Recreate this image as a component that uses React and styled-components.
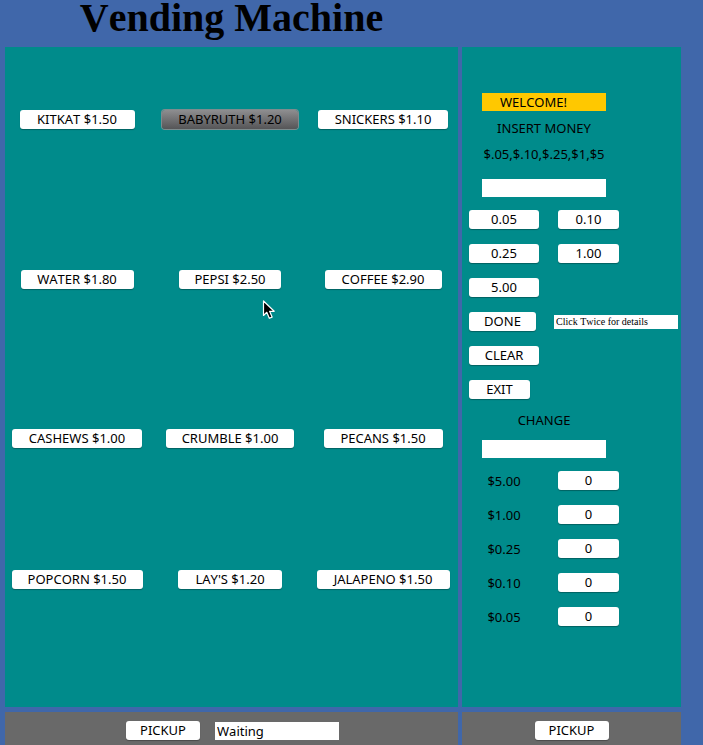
import React, { useState } from "react";
import styled, { createGlobalStyle, css } from "styled-components";

const GlobalStyle = createGlobalStyle`
  *, *::before, *::after { box-sizing: border-box; }
  body {
    margin: 0;
    background: #4067aa;
    color: #000;
    font: 13px/18px "Noto Sans", "Open Sans", sans-serif;
    font-kerning: none;
  }
  button, input { font-kerning: none; }
`;

const Page = styled.div`
  position: relative;
  min-height: 100vh;
  display: grid;
  grid-template-columns: minmax(0, 453fr) minmax(0, 219fr);
  grid-template-rows: auto 1fr auto;
  column-gap: 4px;
  padding: 0 22px 0 5px;
`;

const Title = styled.h1`
  grid-column: 1;
  margin: 0;
  padding-bottom: 11px;
  font: bold 40px/36px "Liberation Serif", serif;
  font-kerning: none;
  text-align: center;
  white-space: nowrap;
`;

const Products = styled.section`
  grid-column: 1;
  display: grid;
  grid-template-columns: repeat(3, minmax(0, 1fr));
  grid-template-rows: 160px 159px 141px auto;
  column-gap: 19px;
  align-items: start;
  justify-items: center;
  padding: 63px 8px 48px 5px;
  background: #008b8b;
`;

const Button = styled.button`
  width: ${(p) => (p.$width ? `${p.$width}px` : "auto")};
  height: 19px;
  padding: 0;
  border: 0;
  border-radius: 3px;
  background: #fff;
  box-shadow: 0 1px 1px rgba(0, 0, 0, 0.3);
  color: #000;
  font: inherit;
  font-kerning: none;
  line-height: 19px;
  text-align: center;
  white-space: nowrap;
  ${(p) =>
    p.$pressed &&
    css`
      background: linear-gradient(#8e8e90, #555557);
      box-shadow: 0 0 0 1px #7d8c8e;
    `}
`;

const Controls = styled.section`
  grid-column: 2;
  display: flex;
  flex-direction: column;
  align-items: flex-start;
  padding: 46px 3px 24px 7px;
  background: #008b8b;
`;

const Display = styled.div`
  width: 150px;
  display: flex;
  flex-direction: column;
  align-items: center;
  gap: 8px;
`;

const Caption = styled.label`
  white-space: nowrap;
`;

const Field = styled.input`
  width: 124px;
  height: 18px;
  padding: 0 2px;
  border: 0;
  border-radius: 0;
  background: #fff;
  color: #000;
  font: inherit;
  font-kerning: none;
`;

const Banner = styled(Field)`
  padding: 0 18px;
  background: #ffc800;
`;

const MoneyField = styled(Field)`
  margin-top: 8px;
`;

const Details = styled(Field)`
  height: 14px;
  font: 10px/14px "Liberation Serif", serif;
  font-kerning: none;
`;

const Keypad = styled.div`
  display: grid;
  grid-template-columns: 70px 61px;
  gap: 15px 19px;
  margin-top: 13px;
`;

const Actions = styled.div`
  display: flex;
  flex-direction: column;
  align-items: flex-start;
  gap: 15px;
  margin: 15px 0 12px;
`;

const ActionRow = styled.div`
  display: flex;
  align-items: center;
  gap: 18px;
`;

const ChangeDisplay = styled(Display)`
  gap: 11px;
`;

const CoinLabel = styled.label`
  height: 19px;
  padding-top: 1px;
  text-align: center;
`;

const Tray = styled.footer`
  display: flex;
  justify-content: center;
  align-items: center;
  gap: 15px;
  margin-top: 5px;
  padding: 9px 0 5px;
  background: #696969;
`;

const PickupTray = styled(Tray)`
  padding-left: 2px;
`;

const Pointer = styled.svg`
  position: absolute;
  left: 262px;
  top: 299px;
  pointer-events: none;
`;

const products = [
  { name: "KITKAT $1.50", width: 115 },
  { name: "BABYRUTH $1.20", width: 136 },
  { name: "SNICKERS $1.10", width: 130 },
  { name: "WATER $1.80", width: 113 },
  { name: "PEPSI $2.50", width: 102 },
  { name: "COFFEE $2.90", width: 117 },
  { name: "CASHEWS $1.00", width: 130 },
  { name: "CRUMBLE $1.00", width: 128 },
  { name: "PECANS $1.50", width: 119 },
  { name: "POPCORN $1.50", width: 131 },
  { name: "LAY'S $1.20", width: 104 },
  { name: "JALAPENO $1.50", width: 133 },
];

const coins = ["0.05", "0.10", "0.25", "1.00", "5.00"];
const change = ["$5.00", "$1.00", "$0.25", "$0.10", "$0.05"];

export default function App() {
  const [selected, setSelected] = useState("BABYRUTH $1.20");

  return (
    <>
      <GlobalStyle />
      <Page>
        <Title>Vending Machine</Title>

        <Products aria-label="Products">
          {products.map(({ name, width }) => (
            <Button
              key={name}
              type="button"
              $width={width}
              $pressed={name === selected}
              onClick={() => setSelected(name)}
            >
              {name}
            </Button>
          ))}
        </Products>

        <Controls aria-label="Payment">
          <Display>
            <Banner aria-label="Status" defaultValue="WELCOME!" />
            <Caption htmlFor="money">INSERT MONEY</Caption>
            <Caption htmlFor="money">$.05,$.10,$.25,$1,$5</Caption>
            <MoneyField id="money" />
          </Display>
          <Keypad>
            {coins.map((coin) => (
              <Button key={coin} type="button">{coin}</Button>
            ))}
          </Keypad>
          <Actions>
            <ActionRow>
              <Button type="button" $width={67}>DONE</Button>
              <Details aria-label="Details" defaultValue="Click Twice for details" />
            </ActionRow>
            <Button type="button" $width={70}>CLEAR</Button>
            <Button type="button" $width={61}>EXIT</Button>
          </Actions>
          <ChangeDisplay>
            <Caption htmlFor="change">CHANGE</Caption>
            <Field id="change" />
          </ChangeDisplay>
          <Keypad>
            {change.map((value) => (
              <React.Fragment key={value}>
                <CoinLabel htmlFor={`coin-${value}`}>{value}</CoinLabel>
                <Button id={`coin-${value}`} type="button">0</Button>
              </React.Fragment>
            ))}
          </Keypad>
        </Controls>

        <PickupTray>
          <Button type="button" $width={74}>PICKUP</Button>
          <Field aria-label="Pickup status" defaultValue="Waiting" />
        </PickupTray>
        <Tray>
          <Button type="button" $width={74}>PICKUP</Button>
        </Tray>

        <Pointer width="14" height="22" viewBox="0 0 14 22" aria-hidden="true">
          <path
            d="M1.5 2v14.5l3.3-3.2 2.5 6 2.8-1.2-2.5-5.8h4.6z"
            fill="#000"
            stroke="#fff"
            strokeWidth="1.2"
            strokeLinejoin="round"
          />
        </Pointer>
      </Page>
    </>
  );
}
